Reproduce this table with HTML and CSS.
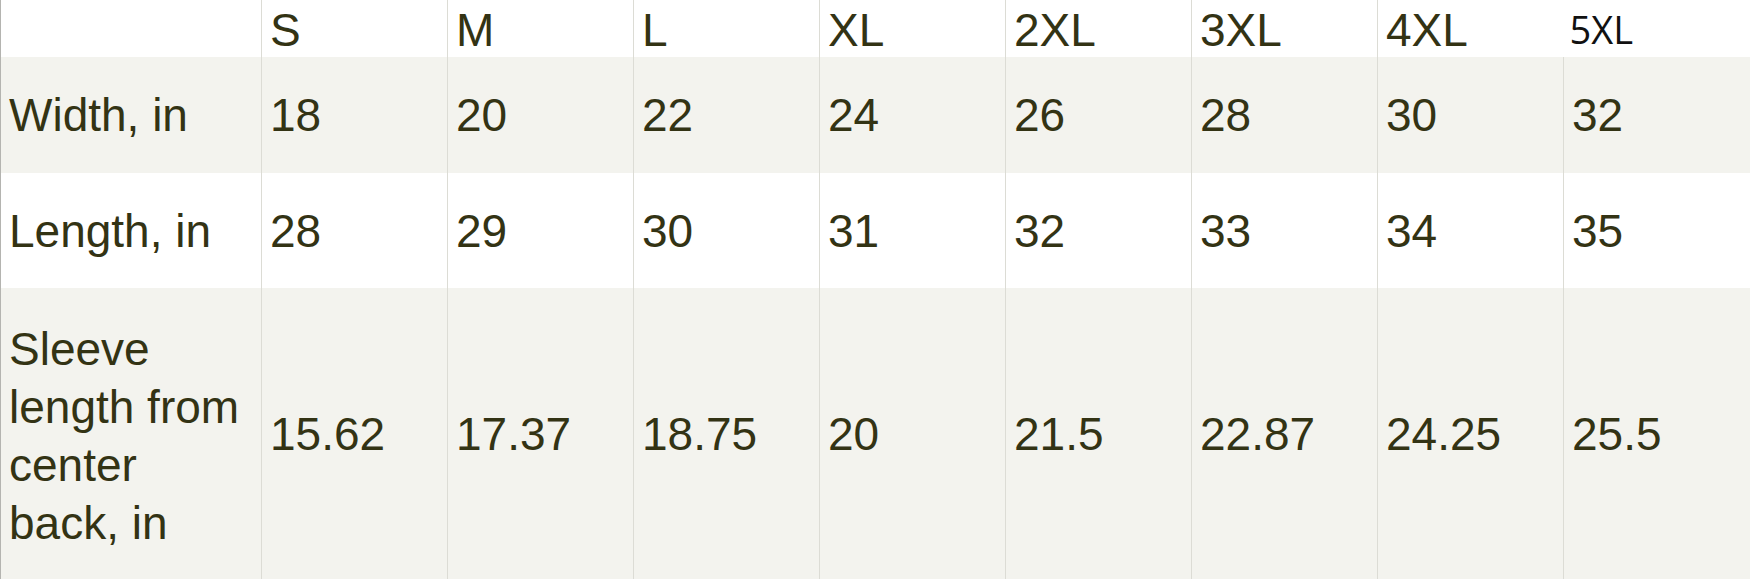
FILE: index.html
```html
<!DOCTYPE html>
<html>
<head>
<meta charset="utf-8">
<link rel="stylesheet" href="styles.css">
</head>
<body>
<table class="sizes">
  <colgroup>
    <col class="c-label"><col class="c-size"><col class="c-size"><col class="c-size"><col class="c-size"><col class="c-size"><col class="c-size"><col class="c-size"><col class="c-last">
  </colgroup>
  <tr class="head">
    <td class="label"></td>
    <td>S</td><td>M</td><td>L</td><td>XL</td><td>2XL</td><td>3XL</td><td>4XL</td><td class="alt">5XL</td>
  </tr>
  <tr class="shade r1">
    <td class="label">Width, in</td>
    <td>18</td><td>20</td><td>22</td><td>24</td><td>26</td><td>28</td><td>30</td><td>32</td>
  </tr>
  <tr class="r2">
    <td class="label">Length, in</td>
    <td>28</td><td>29</td><td>30</td><td>31</td><td>32</td><td>33</td><td>34</td><td>35</td>
  </tr>
  <tr class="shade r3">
    <td class="label">Sleeve length from center back, in</td>
    <td>15.62</td><td>17.37</td><td>18.75</td><td>20</td><td>21.5</td><td>22.87</td><td>24.25</td><td>25.5</td>
  </tr>
</table>
</body>
</html>
```
FILE: styles.css
```css
html, body {
  margin: 0;
  padding: 0;
  background: #ffffff;
}
.sizes {
  border-collapse: collapse;
  table-layout: fixed;
  width: 1750px;
  font-family: "Liberation Sans", Arial, sans-serif;
  font-size: 46px;
  line-height: 58px;
  color: #333314;
}
.c-label { width: 261px; }
.c-size { width: 186px; }
.c-last { width: 187px; }
.sizes td {
  padding: 0 0 0 8px;
  vertical-align: middle;
  border-left: 1px solid #dcdcd5;
  white-space: normal;
}
.sizes td.label {
  border-left: 1px solid #b4b4b0;
  padding-left: 8px;
  padding-right: 16px;
}
.head { height: 57px; }
.head td {
  line-height: 50px;
  padding-top: 3px;
}
.head td.alt {
  border-left: none;
  font-family: "Open Sans", "Liberation Sans", sans-serif;
  font-size: 38px;
  color: #111111;
  padding-left: 6px;
  padding-top: 1px;
}
.shade { background: #f3f3ee; }
.r1 { height: 116px; }
.r2 { height: 115px; }
.r3 { height: 291px; }
.r3 td.label { padding-top: 4px; }
```
